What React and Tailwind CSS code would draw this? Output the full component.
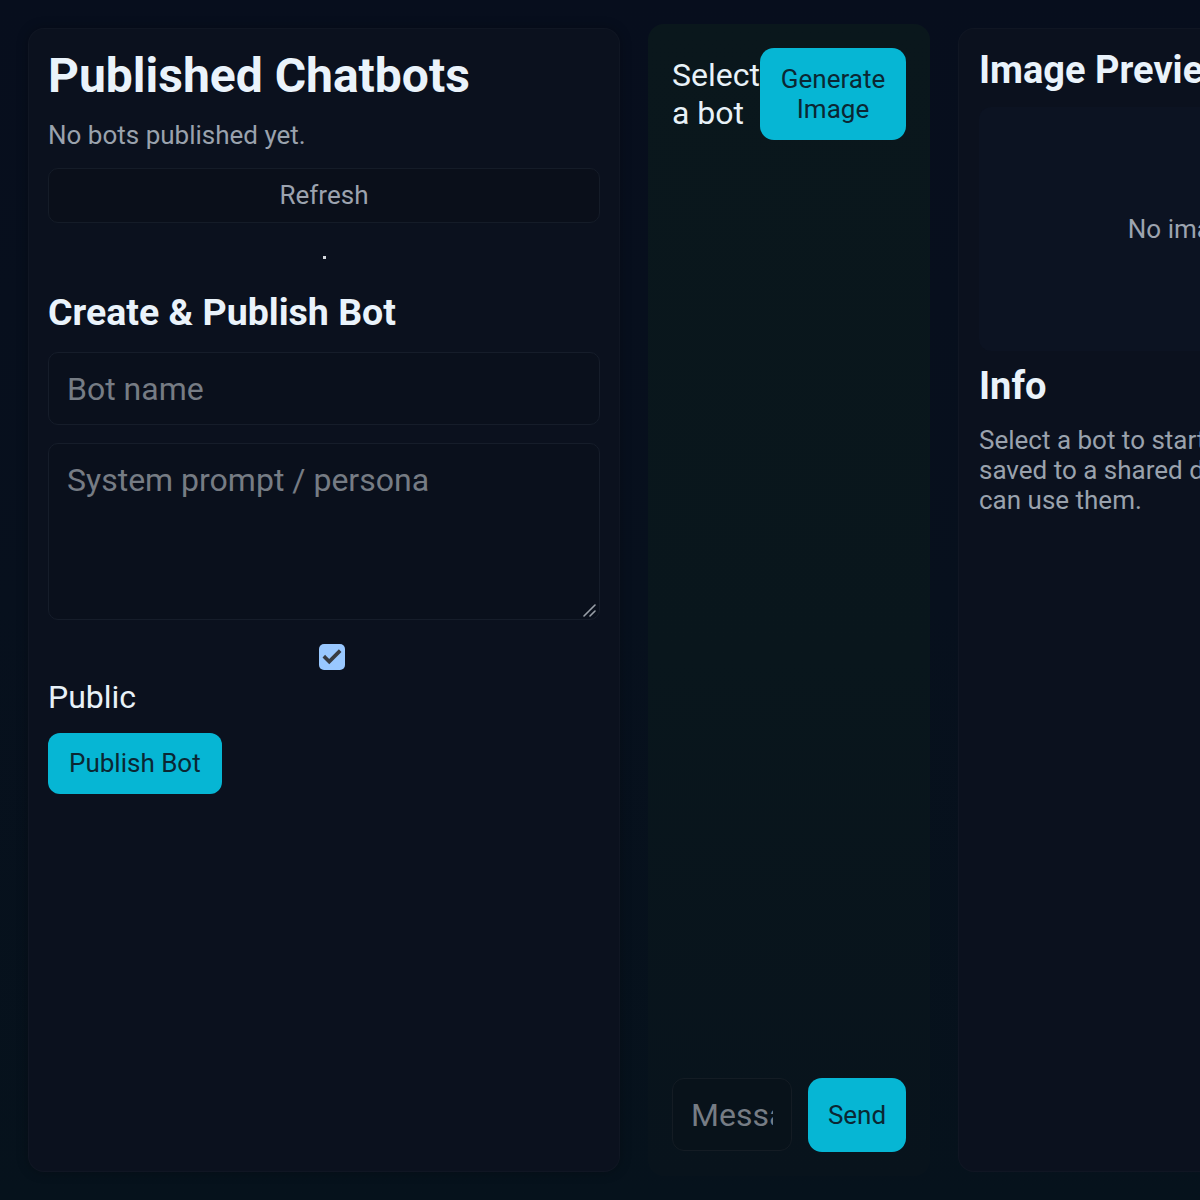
import React from "react";

function Checkbox() {
  return (
    <div className="grid h-[26px] w-[26px] place-items-center rounded-[5px] bg-[#99c8ff]">
      <svg viewBox="0 0 24 24" className="h-[22px] w-[22px]" fill="none">
        <path d="M4.5 12.5l4.5 4.5 10.5-10.5" stroke="#383b40" strokeWidth="4" strokeLinecap="square" />
      </svg>
    </div>
  );
}

function PublishPanel() {
  return (
    <section className="w-[592px] shrink-0 rounded-2xl border border-white/[0.025] bg-[#0b111e] p-[19px] shadow-[0_0_12px_rgba(0,0,0,0.25)]">
      <h1 className="text-[48px] font-bold leading-[56px] text-[#eaf3fb]">Published Chatbots</h1>
      <p className="mt-4 text-[26px] leading-[30px] text-[#9aa2ad]">No bots published yet.</p>
      <button className="mt-[18px] h-[55px] w-full rounded-[10px] border border-[#151c28] bg-[#0a0f1a] text-[26px] text-[#9ca3af]">
        Refresh
      </button>
      <div className="mt-[33px] flex justify-center">
        <span className="h-[3px] w-[3px] bg-[#d4d8dd]" />
      </div>
      <h2 className="mt-[31px] text-[37.5px] font-bold leading-[44px] text-[#eaf3fb]">Create &amp; Publish Bot</h2>
      <input
        placeholder="Bot name"
        className="mt-[18px] block h-[73px] w-full rounded-[10px] border border-[#161d2a] bg-[#0a101c] px-[18px] text-[32px] text-[#e5e7eb] outline-none placeholder:text-[#767c84]"
      />
      <div className="relative mt-[18px]">
        <textarea
          placeholder="System prompt / persona"
          className="block h-[177px] w-full resize-none rounded-[10px] border border-[#161d2a] bg-[#0a101c] px-[18px] py-[18px] text-[32px] leading-[37px] text-[#e5e7eb] outline-none placeholder:text-[#767c84]"
        />
        <svg viewBox="0 0 14 14" className="pointer-events-none absolute bottom-[3px] right-[3px] h-[14px] w-[14px]" fill="none">
          <path d="M1 13L12 2M7 13l5-5" stroke="#9aa0a8" strokeWidth="1.6" strokeLinecap="round" />
        </svg>
      </div>
      <div className="ml-[271px] mt-6">
        <Checkbox />
      </div>
      <div className="mt-[9px] text-[32px] leading-[37px] text-[#e8f1f8]">Public</div>
      <button className="mt-[17px] rounded-xl bg-[#06b6d4] px-[21px] py-[15px] text-[26px] leading-[31px] text-[#0b2733]">
        Publish Bot
      </button>
    </section>
  );
}

function ChatPanel() {
  return (
    <section className="-my-1 flex w-[282px] shrink-0 flex-col justify-between rounded-2xl bg-[linear-gradient(180deg,#0a171c_0%,#09161c_55%,#08131c_100%)] p-6">
      <div className="flex items-center">
        <div className="w-[88px] text-[32px] leading-[38px] text-[#e8f2f8]">Select a bot</div>
        <button className="w-[146px] rounded-[14px] bg-[#06b6d4] py-4 text-center text-[26px] leading-[30px] text-[#0b2733]">
          Generate Image
        </button>
      </div>
      <div className="flex gap-4">
        <input
          placeholder="Message"
          className="h-[73px] min-w-0 flex-1 rounded-[12px] border border-[#141c24] bg-[#08121a] px-[18px] text-[32px] text-[#e5e7eb] outline-none placeholder:text-[#767c84]"
        />
        <button className="h-[74px] w-[98px] rounded-[14px] bg-[#06b6d4] text-[26px] text-[#0b2733]">Send</button>
      </div>
    </section>
  );
}

function PreviewPanel() {
  return (
    <section className="w-[492px] shrink-0 rounded-2xl border border-white/[0.025] bg-[#0b111e] pl-5 pr-5 pt-[19px]">
      <h2 className="text-[38px] font-bold leading-[44px] text-[#eaf3fb]">Image Preview</h2>
      <div className="mt-[15px] flex h-[244px] items-center justify-center rounded-xl bg-[#0c1322] text-[26px] text-[#9ca3af]">
        No image yet
      </div>
      <h2 className="mt-[13px] text-[38px] font-bold leading-[44px] text-[#eaf3fb]">Info</h2>
      <p className="mt-[17px] whitespace-nowrap text-[26px] leading-[30px] text-[#9aa2ad]">
        Select a bot to start chatting. Bots are
        <br />
        saved to a shared database so anyone
        <br />
        can use them.
      </p>
    </section>
  );
}

export default function App() {
  return (
    <div className="h-[1200px] w-[1200px] overflow-hidden bg-[linear-gradient(180deg,#070e1d_0%,#07101d_50%,#06121c_100%)] font-['Roboto','Noto_Sans',sans-serif]">
      <div className="flex h-full w-[1478px] gap-7 p-7">
        <PublishPanel />
        <ChatPanel />
        <PreviewPanel />
      </div>
    </div>
  );
}
